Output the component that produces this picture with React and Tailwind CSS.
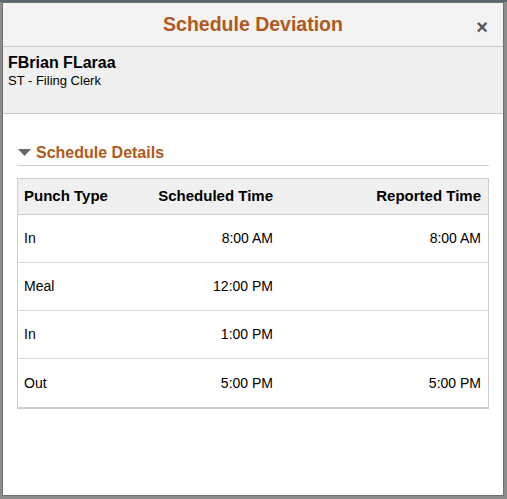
const rows = [
  { type: "In", scheduled: "8:00 AM", reported: "8:00 AM" },
  { type: "Meal", scheduled: "12:00 PM", reported: "" },
  { type: "In", scheduled: "1:00 PM", reported: "" },
  { type: "Out", scheduled: "5:00 PM", reported: "5:00 PM" },
];

export default function App() {
  return (
    <div
      className="w-[507px] h-[499px] bg-[#8c8c8c] border-t-2 border-[#5c6670] pl-[2px] overflow-hidden"
      style={{ fontFamily: '"Liberation Sans", Arial, sans-serif' }}
    >
      <div className="w-[502px] h-[494px] bg-white border border-[#6f6f6f] flex flex-col">
        {/* title bar */}
        <div className="h-[44px] bg-[#f3f3f3] border-b border-[#c8c8c8] flex items-center justify-center relative pt-[1px]">
          <span className="text-[19.5px] font-bold text-[#b0591a]">Schedule Deviation</span>
          <button className="absolute right-[15px] top-[14px] text-[#555] text-[20px] leading-none font-bold">
            ×
          </button>
        </div>

        {/* employee */}
        <div className="h-[67px] bg-[#f0f0f0] border-b border-[#c8c8c8] px-[5px] pt-[6px]">
          <div className="text-[16px] font-bold text-black leading-[19px]">FBrian FLaraa</div>
          <div className="text-[13px] text-black leading-[16px] mt-[1px]">ST - Filing Clerk</div>
        </div>

        {/* body */}
        <div className="px-[14px] pt-[29px]">
          <div className="flex items-center gap-[5px] pl-[1px] pb-[3px] border-b border-[#cfcfcf]">
            <svg width="13" height="8" viewBox="0 0 13 8">
              <polygon points="0,0 13,0 6.5,7" fill="#666" />
            </svg>
            <span className="text-[16px] font-bold text-[#b0591a] leading-[19px]">Schedule Details</span>
          </div>

          <div className="mt-[12px] border border-[#cfcfcf] border-b-2">
            <div className="h-[36px] bg-[#f0f0f0] border-b border-[#cfcfcf] grid grid-cols-[104px_145px_1fr] items-center pl-[6px] pr-[7px] text-[15px] font-bold text-black">
              <span>Punch Type</span>
              <span className="text-right">Scheduled Time</span>
              <span className="text-right">Reported Time</span>
            </div>
            {rows.map((r, i) => (
              <div
                key={i}
                className={`h-[48px] grid grid-cols-[104px_145px_1fr] items-center pl-[6px] pr-[7px] text-[14px] text-black ${
                  i < rows.length - 1 ? "border-b border-[#d6d6d6]" : ""
                }`}
              >
                <span>{r.type}</span>
                <span className="text-right">{r.scheduled}</span>
                <span className="text-right">{r.reported}</span>
              </div>
            ))}
          </div>
        </div>
      </div>
    </div>
  );
}
